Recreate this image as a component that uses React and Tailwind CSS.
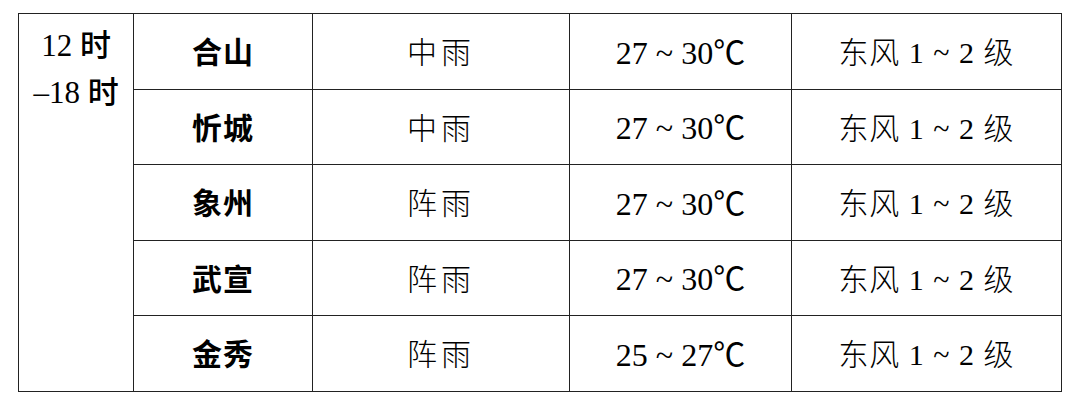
const rows = [
  { name: '合山', weather: '中雨', temp: '27 ~ 30℃' },
  { name: '忻城', weather: '中雨', temp: '27 ~ 30℃' },
  { name: '象州', weather: '阵雨', temp: '27 ~ 30℃' },
  { name: '武宣', weather: '阵雨', temp: '27 ~ 30℃' },
  { name: '金秀', weather: '阵雨', temp: '25 ~ 27℃' },
];

const cjk = { fontFamily: '"Liberation Serif", "Noto Sans CJK SC", serif' };

export default function App() {
  return (
    <div className="w-[1080px] h-[411px] bg-white pt-[13px] pl-[18px]" style={cjk}>
      <table className="border-collapse text-black">
        <tbody>
          {rows.map((r, i) => (
            <tr key={r.name} className="h-[75.5px]">
              {i === 0 && (
                <td
                  rowSpan={5}
                  className="w-[115px] border-[1.5px] border-[#222] align-top text-center text-[31px] leading-[47px] pt-[8px] font-medium"
                >
                  <div>12 时</div>
                  <div>–18 时</div>
                </td>
              )}
              <td className="w-[179px] border-[1.5px] border-[#222] text-center text-[30px] font-bold tracking-[1px] pt-[3px]">
                {r.name}
              </td>
              <td className="w-[257px] border-[1.5px] border-[#222] text-center text-[30px] font-light tracking-[4px] pt-[3px]">
                {r.weather}
              </td>
              <td className="w-[222px] border-[1.5px] border-[#222] text-center text-[32px] pt-[3px]">
                {r.temp}
              </td>
              <td className="w-[270px] border-[1.5px] border-[#222] text-center text-[30px] font-light tracking-[1px] pt-[3px]">
                东风 1 ~ 2 级
              </td>
            </tr>
          ))}
        </tbody>
      </table>
    </div>
  );
}
